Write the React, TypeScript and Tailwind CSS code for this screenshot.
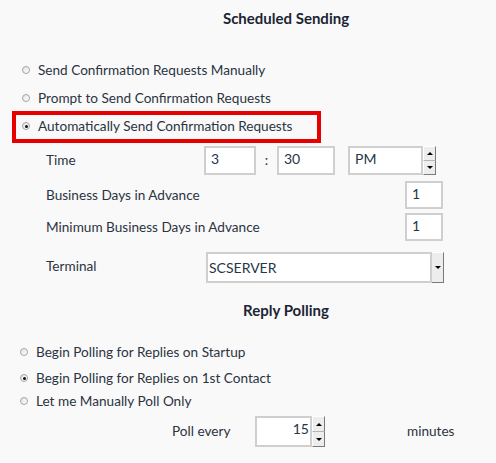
import React from "react";

function Radio({ checked }: { checked?: boolean }) {
	return (
		<span className="w-[8px] h-[8px] rounded-full border border-[#a5a5a5] bg-gradient-to-br from-[#e2e2e2] to-white flex items-center justify-center shrink-0">
			{checked && <span className="w-[3px] h-[3px] rounded-full bg-[#111]" />}
		</span>
	);
}

function Spin({ h }: { h: string }) {
	return (
		<div className={`flex flex-col w-[13px] ${h}`}>
			<div className="flex-1 bg-[#ededed] border-t border-l border-white border-r border-r-[#7a7a7a] border-b border-b-[#b5b5b5] flex items-center justify-center">
				<span className="w-0 h-0 border-l-[3px] border-r-[3px] border-b-[3px] border-l-transparent border-r-transparent border-b-black" />
			</div>
			<div className="flex-1 bg-[#ededed] border-l border-white border-r border-r-[#7a7a7a] border-b border-b-[#7a7a7a] flex items-center justify-center">
				<span className="w-0 h-0 border-l-[3px] border-r-[3px] border-t-[3px] border-l-transparent border-r-transparent border-t-black" />
			</div>
		</div>
	);
}

function Box({ w, value, right }: { w: string; value: string; right?: boolean }) {
	return (
		<div
			className={`${w} h-full bg-white border-2 border-[#cfcfcf] text-[#26364a] text-[14px] leading-[16px] pt-[3px] ${
				right ? "text-right pr-[1px]" : "pl-[5px]"
			}`}
		>
			{value}
		</div>
	);
}

export default function App() {
	return (
		<div
			className="w-[496px] h-[463px] bg-[#f9f9f9] flex flex-col text-[13.6px] text-[#2b3441]"
			style={{ fontFamily: "Lato, 'Open Sans', sans-serif" }}
		>
			{/* Scheduled Sending */}
			<div className="h-[56px] pl-[76px] pt-[10px] text-center font-bold text-[15px] leading-[17px] text-[#1c2533]">
				Scheduled Sending
			</div>

			<div className="h-[28px] flex items-center pl-[22px] gap-[8px]">
				<Radio />
				<span>Send Confirmation Requests Manually</span>
			</div>
			<div className="h-[28px] flex items-center pl-[22px] gap-[8px]">
				<Radio />
				<span>Prompt to Send Confirmation Requests</span>
			</div>
			<div className="h-[28px] flex items-center pl-[22px] gap-[8px] relative">
				<Radio checked />
				<span>Automatically Send Confirmation Requests</span>
				<div className="absolute left-[12px] top-[-1px] w-[309px] h-[32px] border-4 border-[#e60000]" />
			</div>

			{/* Time */}
			<div className="mt-[6px] h-[29px] flex items-center">
				<span className="w-[204px] pl-[46px]">Time</span>
				<Box w="w-[52px]" value="3" />
				<span className="w-[21px] text-center">:</span>
				<Box w="w-[58px]" value="30" />
				<span className="w-[13px]" />
				<Box w="w-[75px]" value="PM" />
				<Spin h="h-[29px]" />
			</div>

			<div className="mt-[6px] h-[28px] flex items-center">
				<span className="w-[405px] pl-[46px]">Business Days in Advance</span>
				<Box w="w-[38px]" value="1" />
			</div>
			<div className="mt-[4px] h-[28px] flex items-center">
				<span className="w-[405px] pl-[46px]">Minimum Business Days in Advance</span>
				<Box w="w-[38px]" value="1" />
			</div>

			<div className="mt-[11px] h-[31px] flex items-start">
				<span className="w-[206px] pl-[46px] pt-[4px]">Terminal</span>
				<div className="w-[226px] h-full bg-white border-2 border-[#cfcfcf] flex items-center pl-[1px] text-[#26364a] text-[14px]">
					SCSERVER
				</div>
				<div className="w-[12px] h-full bg-[#ededed] border-t border-t-white border-r border-r-[#7a7a7a] border-b border-b-[#7a7a7a] flex items-center justify-center">
					<span className="w-0 h-0 border-l-[3px] border-r-[3px] border-t-[3px] border-l-transparent border-r-transparent border-t-black" />
				</div>
			</div>

			{/* Reply Polling */}
			<div className="mt-[19px] h-[17px] pl-[76px] text-center font-bold text-[15px] leading-[17px] text-[#1c2533]">
				Reply Polling
			</div>

			<div className="mt-[20px] h-[26px] flex items-center pl-[20px] gap-[8px]">
				<Radio />
				<span>Begin Polling for Replies on Startup</span>
			</div>
			<div className="h-[26px] flex items-center pl-[20px] gap-[8px]">
				<Radio checked />
				<span>Begin Polling for Replies on 1st Contact</span>
			</div>
			<div className="h-[20px] flex items-center pl-[20px] gap-[8px]">
				<Radio />
				<span>Let me Manually Poll Only</span>
			</div>

			<div className="mt-[5px] h-[31px] flex items-center">
				<span className="w-[255px] pl-[172px]">Poll every</span>
				<Box w="w-[57px]" value="15" right />
				<Spin h="h-[31px]" />
				<span className="pl-[82px]">minutes</span>
			</div>
		</div>
	);
}
